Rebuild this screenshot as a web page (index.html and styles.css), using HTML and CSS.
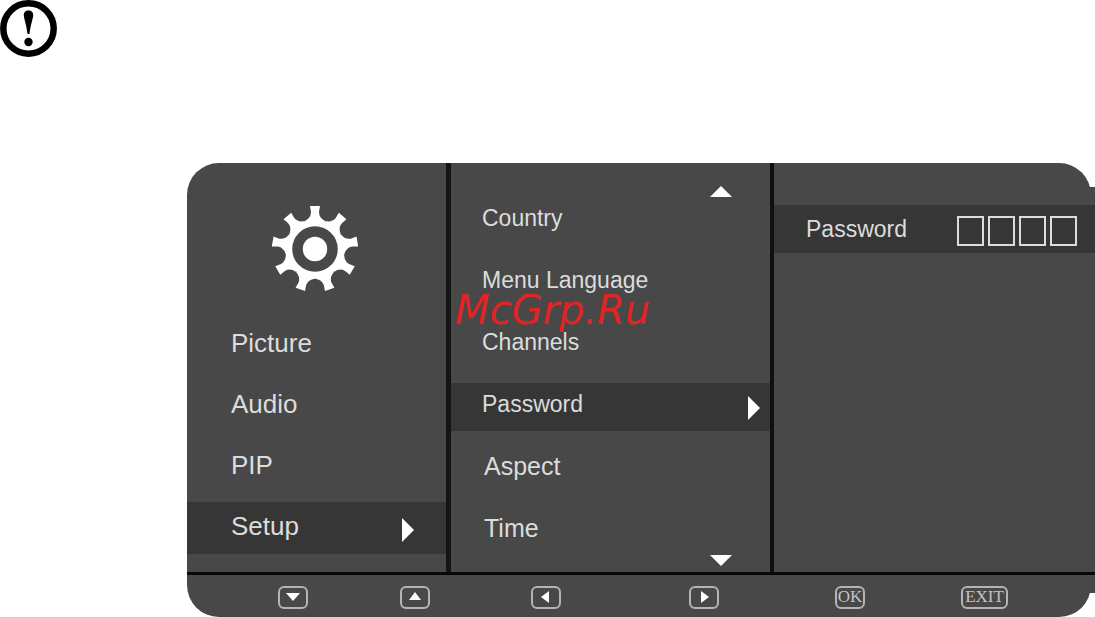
FILE: index.html
```
<!DOCTYPE html>
<html lang="en">
<head>
    <meta charset="UTF-8">
    <meta name="viewport" content="width=device-width, initial-scale=1.0">
    <title>Setup - Password</title>
    <link rel="stylesheet" href="styles.css">
</head>
<body>
    <header class="notice">
        <svg class="notice-icon" viewBox="0 0 57 57" role="img" aria-label="Important">
            <circle cx="28.5" cy="28.5" r="25.2" fill="none" stroke="#000" stroke-width="6.5"/>
            <path d="M28.5 10.5c3.200 0 4.900 2 4.700 5c-.2 3-2.800 10-3.700 18.500h-2C26.600 25.500 24 18.500 23.800 15.500c-.2-3 1.500-5 4.700-5z"/>
            <circle cx="28.5" cy="42" r="4.200"/>
        </svg>
    </header>

    <main class="osd">
        <div class="columns">
            <nav class="column main-menu">
                <svg class="gear" viewBox="-43 -43 86 86" aria-hidden="true">
                    <defs>
                        <path id="tooth" d="M-5-43H5L4-37Q4-31 10-28L8-20H-8L-10-28Q-4-31-4-37Z"/>
                    </defs>
                    <g fill="#fff">
                        <use href="#tooth"/>
                        <use href="#tooth" transform="rotate(40)"/>
                        <use href="#tooth" transform="rotate(80)"/>
                        <use href="#tooth" transform="rotate(120)"/>
                        <use href="#tooth" transform="rotate(160)"/>
                        <use href="#tooth" transform="rotate(200)"/>
                        <use href="#tooth" transform="rotate(240)"/>
                        <use href="#tooth" transform="rotate(280)"/>
                        <use href="#tooth" transform="rotate(320)"/>
                        <circle r="29"/>
                    </g>
                    <circle r="17.5" fill="#fff" stroke="#484848" stroke-width="10.5"/>
                </svg>
                <ul class="menu">
                    <li><button class="item" type="button">Picture</button></li>
                    <li><button class="item" type="button">Audio</button></li>
                    <li><button class="item" type="button">PIP</button></li>
                    <li>
                        <button class="item selected" type="button">Setup
                            <svg class="arrow" viewBox="0 0 12 24" aria-hidden="true"><path d="M0 0L12 12L0 24Z"/></svg>
                        </button>
                    </li>
                </ul>
            </nav>

            <section class="column sub-menu">
                <button class="scroll" type="button" aria-label="Scroll up">
                    <svg viewBox="0 0 22 11"><path d="M11 0L22 11H0Z"/></svg>
                </button>
                <ul class="menu">
                    <li><button class="item" type="button">Country</button></li>
                    <li><button class="item" type="button">Menu Language</button></li>
                    <li><button class="item" type="button">Channels</button></li>
                    <li>
                        <button class="item selected" type="button">Password
                            <svg class="arrow" viewBox="0 0 12 24" aria-hidden="true"><path d="M0 0L12 12L0 24Z"/></svg>
                        </button>
                    </li>
                    <li><button class="item large" type="button">Aspect</button></li>
                    <li><button class="item large" type="button">Time</button></li>
                </ul>
                <button class="scroll" type="button" aria-label="Scroll down">
                    <svg viewBox="0 0 22 11"><path d="M0 0H22L11 11Z"/></svg>
                </button>
                <span class="watermark">McGrp.Ru</span>
            </section>

            <form class="column detail">
                <div class="password-row">
                    <label for="digit1">Password</label>
                    <div class="digits">
                        <input class="digit" id="digit1" type="password" maxlength="1">
                        <input class="digit" type="password" maxlength="1" aria-label="Digit 2">
                        <input class="digit" type="password" maxlength="1" aria-label="Digit 3">
                        <input class="digit" type="password" maxlength="1" aria-label="Digit 4">
                    </div>
                </div>
            </form>
        </div>

        <footer class="keys">
            <button class="key" type="button" aria-label="Down">
                <svg viewBox="0 0 14 12"><path d="M0 2H14L7 10Z"/></svg>
            </button>
            <button class="key" type="button" aria-label="Up">
                <svg viewBox="0 0 14 12"><path d="M7 1L13 9H1Z"/></svg>
            </button>
            <button class="key" type="button" aria-label="Left">
                <svg viewBox="0 0 14 12"><path d="M10 0V12L2 6Z"/></svg>
            </button>
            <button class="key" type="button" aria-label="Right">
                <svg viewBox="0 0 14 12"><path d="M4 0L12 6L4 12Z"/></svg>
            </button>
            <button class="key" type="button">OK</button>
            <button class="key wide" type="button">EXIT</button>
        </footer>
    </main>
</body>
</html>
```
FILE: styles.css
```
* {
    box-sizing: border-box;
}
body {
    margin: 0;
    background-color: #fff;
    font-family: "Liberation Sans", Arial, sans-serif;
    color: #dcdcdc;
}
button, input {
    font: inherit;
    color: inherit;
    background: none;
    border: 0;
    border-radius: 0;
    padding: 0;
    margin: 0;
}
svg {
    display: block;
    fill: #fff;
}
.notice {
    padding-bottom: 106px;
}
.notice-icon {
    width: 57px;
    height: 57px;
    fill: #000;
}

/* on-screen menu */
.osd {
    position: relative;
    isolation: isolate;
    margin-left: 187px;
}
.osd::before, .osd::after {
    content: "";
    position: absolute;
    z-index: -1;
    background-color: #484848;
}
.osd::before {
    inset: 0 4px 0 0;
    border-radius: 32px;
}
.osd::after {
    top: 24px;
    right: 0;
    bottom: 24px;
    width: 6px;
}
.columns {
    display: grid;
    grid-template-columns: 264fr 323fr 321fr;
    border-bottom: 3px solid #080808;
}
.column {
    display: flex;
    flex-direction: column;
}
.main-menu {
    justify-content: space-between;
    padding: 43px 0 18px;
    border-right: 5px solid #141414;
    font-size: 26px;
}
.gear {
    width: 86px;
    height: 86px;
    margin-left: 85px;
}
.menu {
    display: flex;
    flex-direction: column;
    list-style: none;
    margin: 0;
    padding: 0;
}
.main-menu .menu {
    gap: 9px;
}
.sub-menu .menu {
    gap: 14px;
}
.item {
    display: flex;
    align-items: center;
    justify-content: space-between;
    width: 100%;
    text-align: left;
}
.main-menu .item {
    height: 52px;
    padding: 0 32px 4px 44px;
}
.sub-menu .item {
    height: 48px;
    padding: 0 10px 6px 31px;
}
.sub-menu .large {
    padding-left: 33px;
    font-size: 25px;
}
.selected {
    background-color: #363636;
}
.arrow {
    width: 12px;
    height: 24px;
    margin-top: 8px;
}
.sub-menu {
    position: relative;
    padding: 23px 0 6px;
    border-right: 4px solid #101010;
    font-size: 23px;
}
.scroll {
    align-self: flex-end;
    margin-right: 38px;
}
.scroll svg {
    width: 22px;
    height: 11px;
}
.watermark {
    position: absolute;
    top: 124px;
    left: 4px;
    font-family: "DejaVu Sans", sans-serif;
    font-size: 40px;
    line-height: 46px;
    font-style: italic;
    color: #e02424;
}
.detail {
    padding-top: 42px;
    font-size: 23px;
}
.password-row {
    display: flex;
    align-items: center;
    justify-content: space-between;
    height: 48px;
    padding: 0 18px 0 32px;
    background-color: #363636;
}
.digits {
    display: flex;
    gap: 4px;
    padding-top: 4px;
}
.digit {
    width: 27px;
    height: 30px;
    border: 2px solid #dcdcdc;
    text-align: center;
}

/* remote control keys */
.keys {
    display: grid;
    grid-template-columns: 122fr 131fr 158fr 146fr 126fr 134fr;
    justify-items: start;
    align-items: center;
    height: 42px;
    padding: 2px 0 0 91px;
}
.key {
    display: flex;
    align-items: center;
    justify-content: center;
    width: 30px;
    height: 23px;
    border: 2px solid #b4b4b4;
    border-radius: 6px;
    font-family: "Liberation Serif", serif;
    font-size: 17px;
    color: #c4c4c4;
}
.key svg {
    width: 14px;
    height: 12px;
}
.wide {
    width: 47px;
}
```
